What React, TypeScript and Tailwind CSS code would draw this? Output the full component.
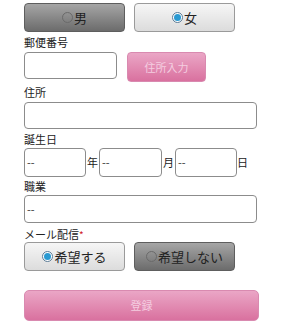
const font = { fontFamily: '"Noto Sans CJK JP", "Noto Sans", sans-serif' };

function Radio({ checked }: { checked: boolean }) {
	return (
		<span
			className={`inline-flex items-center justify-center w-[11px] h-[11px] rounded-full border mr-[1px] ${
				checked ? "border-[#5a7a95] bg-white" : "border-[#6a6a6a] bg-transparent"
			}`}
		>
			{checked && <span className="w-[7px] h-[7px] rounded-full bg-[#2a9ad2]" />}
		</span>
	);
}

function ToggleButton({ label, checked }: { label: string; checked: boolean }) {
	return (
		<div
			className={`w-[101px] h-[29px] flex items-center justify-center rounded-[4px] border text-[13px] ${
				checked
					? "border-[#9a9a9a] bg-gradient-to-b from-[#f6f6f6] to-[#dcdcdc] text-[#222]"
					: "border-[#5e5e5e] bg-gradient-to-b from-[#a6a6a6] to-[#6c6c6c] text-[#222]"
			}`}
		>
			<Radio checked={checked} />
			<span className="leading-none">{label}</span>
		</div>
	);
}

function Label({ children }: { children: React.ReactNode }) {
	return <div className="text-[11px] leading-[15px] text-[#222]">{children}</div>;
}

function Field({ w, h, value }: { w: string; h: string; value?: string }) {
	return (
		<div className={`${w} ${h} rounded-[4px] border border-[#8c8c8c] bg-white flex items-center pl-[2px] text-[11px] text-[#333]`}>
			{value}
		</div>
	);
}

export default function App() {
	return (
		<div className="w-[281px] h-[335px] bg-white pl-[24px] pt-[3px]" style={font}>
			<div className="flex gap-[9px]">
				<ToggleButton label="男" checked={false} />
				<ToggleButton label="女" checked />
			</div>
			<div className="mt-[3px]">
				<Label>郵便番号</Label>
			</div>
			<div className="flex items-start gap-[10px] mt-[2px]">
				<Field w="w-[93px]" h="h-[27px]" />
				<div className="w-[79px] h-[30px] rounded-[4px] border border-[#d98ab0] bg-gradient-to-b from-[#eaa6c6] to-[#d9719f] flex items-center justify-center text-[11px] text-[#f4cde0]">
					住所入力
				</div>
			</div>
			<div className="mt-[3px]">
				<Label>住所</Label>
			</div>
			<div className="mt-[2px]">
				<Field w="w-[233px]" h="h-[27px]" />
			</div>
			<div className="mt-[3px]">
				<Label>誕生日</Label>
			</div>
			<div className="flex items-center mt-[1px] text-[11px] text-[#222]">
				<Field w="w-[62px]" h="h-[29px]" value="--" />
				<span className="w-[13px] text-center">年</span>
				<Field w="w-[63px]" h="h-[29px]" value="--" />
				<span className="w-[13px] text-center">月</span>
				<Field w="w-[62px]" h="h-[29px]" value="--" />
				<span className="w-[11px] text-center">日</span>
			</div>
			<div className="mt-[2px]">
				<Label>職業</Label>
			</div>
			<div className="mt-[1px]">
				<Field w="w-[233px]" h="h-[28px]" value="--" />
			</div>
			<div className="mt-[4px]">
				<Label>
					メール配信<span className="text-[#d0202a] align-top text-[10px]">*</span>
				</Label>
			</div>
			<div className="flex gap-[9px]">
				<ToggleButton label="希望する" checked />
				<ToggleButton label="希望しない" checked={false} />
			</div>
			<div className="mt-[19px] w-[235px] h-[31px] rounded-[5px] border border-[#d98ab0] bg-gradient-to-b from-[#eaa6c6] to-[#d9719f] flex items-center justify-center text-[11px] text-[#f4cde0]">
				登録
			</div>
		</div>
	);
}
